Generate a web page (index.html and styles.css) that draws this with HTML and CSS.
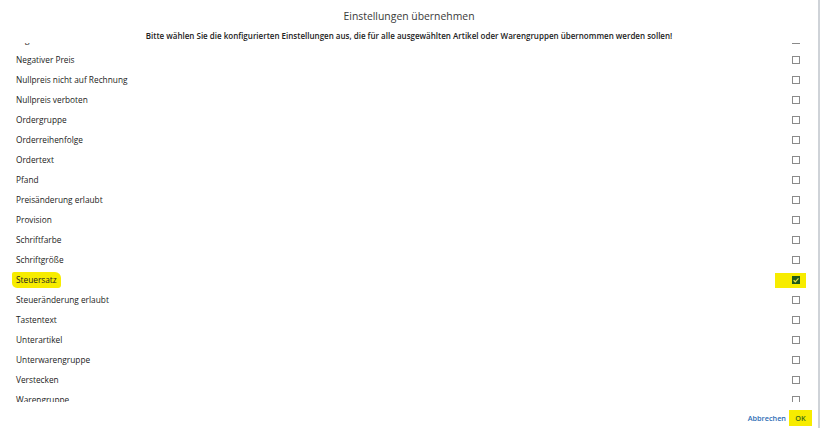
FILE: index.html
```html
<!DOCTYPE html>
<html lang="de">
<head>
<meta charset="utf-8">
<title>Einstellungen übernehmen</title>
<link rel="stylesheet" href="styles.css">
</head>
<body>
<div class="dialog">
  <header class="head">
    <h1 class="title">Einstellungen übernehmen</h1>
    <p class="subtitle">Bitte wählen Sie die konfigurierten Einstellungen aus, die für alle ausgewählten Artikel oder Warengruppen übernommen werden sollen!</p>
  </header>
  <div class="list">
    <div class="list-inner">
      <div class="row"><span class="label">Lagerartikel</span><span class="cb"></span></div>
      <div class="row"><span class="label">Negativer Preis</span><span class="cb"></span></div>
      <div class="row"><span class="label">Nullpreis nicht auf Rechnung</span><span class="cb"></span></div>
      <div class="row"><span class="label">Nullpreis verboten</span><span class="cb"></span></div>
      <div class="row"><span class="label">Ordergruppe</span><span class="cb"></span></div>
      <div class="row"><span class="label">Orderreihenfolge</span><span class="cb"></span></div>
      <div class="row"><span class="label">Ordertext</span><span class="cb"></span></div>
      <div class="row"><span class="label">Pfand</span><span class="cb"></span></div>
      <div class="row"><span class="label">Preisänderung erlaubt</span><span class="cb"></span></div>
      <div class="row"><span class="label">Provision</span><span class="cb"></span></div>
      <div class="row"><span class="label">Schriftfarbe</span><span class="cb"></span></div>
      <div class="row"><span class="label">Schriftgröße</span><span class="cb"></span></div>
      <div class="row"><span class="label hl">Steuersatz</span><span class="cb-wrap hl"><span class="cb checked"><svg viewBox="0 0 8 8" width="8" height="8"><path d="M1.6 4.2 L3.3 5.8 L6.5 2.4" fill="none" stroke="#e9e34a" stroke-width="1.2"/></svg></span></span></div>
      <div class="row"><span class="label">Steueränderung erlaubt</span><span class="cb"></span></div>
      <div class="row"><span class="label">Tastentext</span><span class="cb"></span></div>
      <div class="row"><span class="label">Unterartikel</span><span class="cb"></span></div>
      <div class="row"><span class="label">Unterwarengruppe</span><span class="cb"></span></div>
      <div class="row"><span class="label">Verstecken</span><span class="cb"></span></div>
      <div class="row"><span class="label">Warengruppe</span><span class="cb"></span></div>
    </div>
  </div>
  <footer class="foot">
    <span class="btn cancel">Abbrechen</span>
    <span class="btn ok">OK</span>
  </footer>
</div>
</body>
</html>
```

FILE: styles.css
```css
html, body {
  margin: 0;
  padding: 0;
  background: #ffffff;
}
body {
  font-family: "Open Sans", "Noto Sans", sans-serif;
  color: #222;
  width: 820px;
  height: 428px;
  overflow: hidden;
}
.dialog {
  width: 818px;
  height: 428px;
  border-right: 2px solid #cfd3d8;
  display: flex;
  flex-direction: column;
}
.head {
  height: 43px;
  display: flex;
  flex-direction: column;
  align-items: center;
}
.title {
  margin: 8px 0 0 0;
  font-size: 10.4px;
  font-weight: 400;
  line-height: 16px;
  color: #3a3a3a;
}
.subtitle {
  margin: 6px 0 0 0;
  font-size: 8px;
  font-weight: 600;
  line-height: 11px;
  color: #222;
}
.list {
  height: 359px;
  overflow: hidden;
}
.list-inner {
  margin-top: -13px;
}
.row {
  height: 20px;
  display: flex;
  align-items: center;
  justify-content: space-between;
  padding: 0 18px 0 16px;
  font-size: 8.3px;
  color: #222;
}
.label {
  line-height: 16px;
}
.label.hl {
  background: #f7ec00;
  margin-left: -4px;
  padding: 0 4px 0 4px;
  border-radius: 2px 6px 3px 5px;
}
.cb {
  width: 8px;
  height: 8px;
  border: 1px solid #8a8a8a;
  box-sizing: border-box;
  display: block;
  background: #fff;
}
.cb-wrap.hl {
  background: #f7ec00;
  width: 31px;
  height: 15px;
  margin-right: -6px;
  display: flex;
  align-items: center;
  justify-content: flex-end;
  padding-right: 6px;
  box-sizing: border-box;
}
.cb.checked {
  background: #1f5a1a;
  border-color: #1f5a1a;
}
.cb.checked svg {
  display: block;
  margin: -1px;
}
.foot {
  flex: 1;
  display: flex;
  justify-content: flex-end;
  align-items: flex-end;
  padding: 0 6px 2px 0;
  gap: 3px;
}
.btn {
  font-size: 7.3px;
  font-weight: 600;
  line-height: 16px;
}
.cancel {
  color: #2d6db5;
}
.ok {
  background: #f7ec00;
  color: #3a6a1a;
  width: 23px;
  text-align: center;
}
```
